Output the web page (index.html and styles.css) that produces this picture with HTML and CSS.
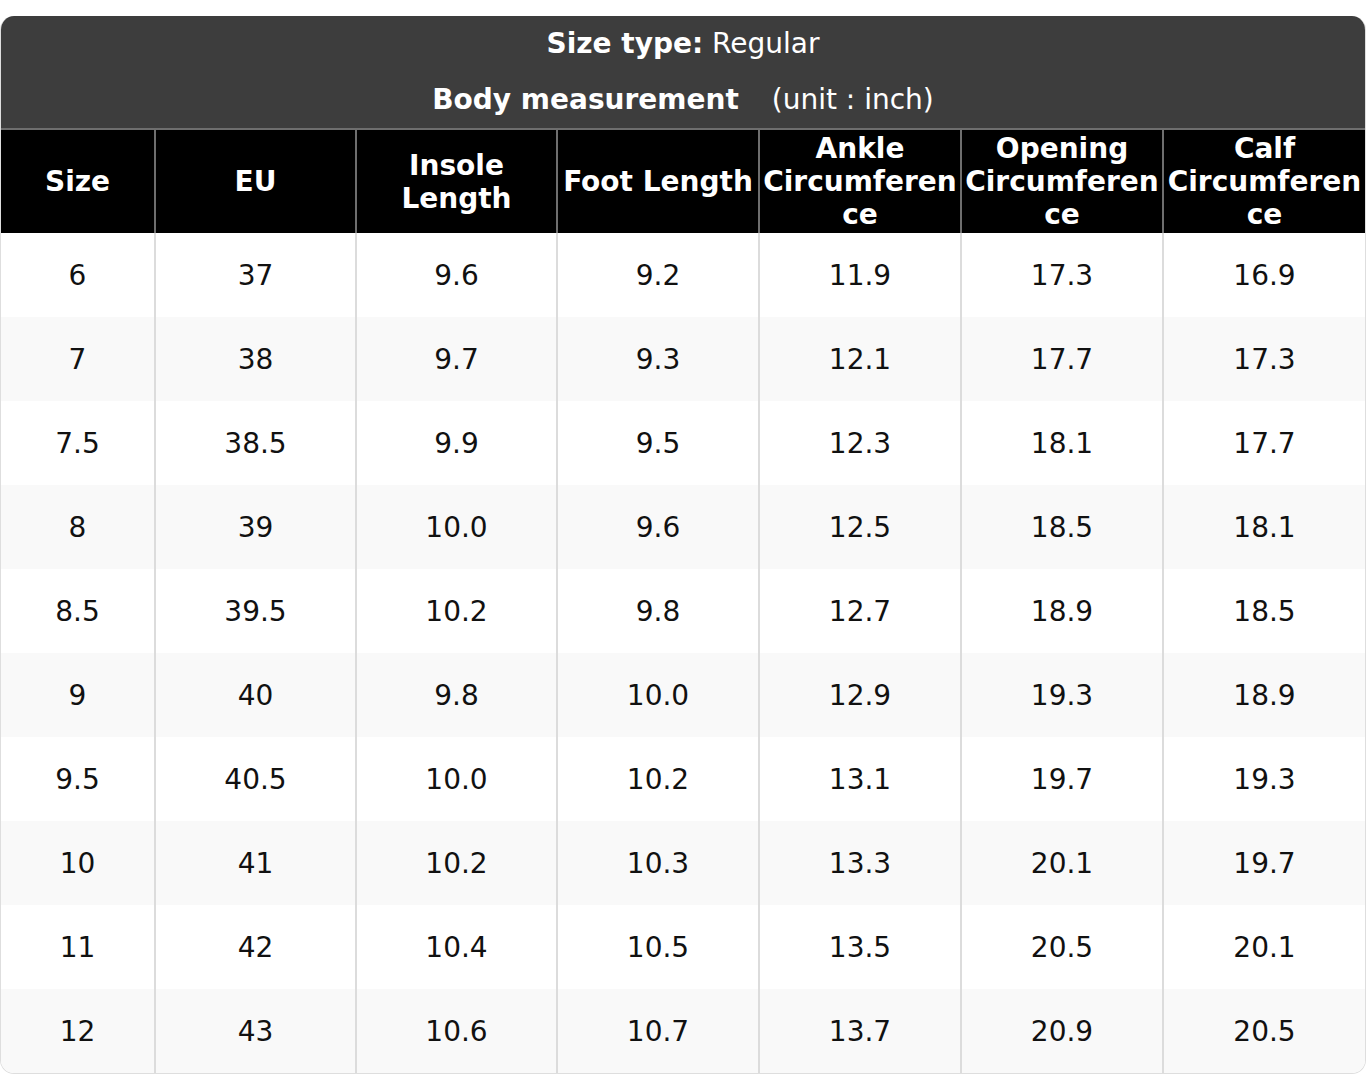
FILE: index.html
```html
<!DOCTYPE html>
<html lang="en">
<head>
<meta charset="utf-8">
<title>Size chart</title>
<link rel="stylesheet" href="styles.css">
</head>
<body>
<div class="chart">
  <div class="caption">
    <div class="caption-line"><b>Size type:</b> Regular</div>
    <div class="caption-line"><b>Body measurement</b> <span class="unit">(unit : inch)</span></div>
  </div>
  <table class="sizes">
    <colgroup>
      <col class="c1"><col class="c2"><col class="c3"><col class="c4"><col class="c5"><col class="c6"><col class="c7">
    </colgroup>
    <thead>
      <tr>
        <th>Size</th><th>EU</th><th>Insole Length</th><th>Foot Length</th><th>Ankle Circumference</th><th>Opening Circumference</th><th>Calf Circumference</th>
      </tr>
    </thead>
    <tbody>
      <tr><td>6</td><td>37</td><td>9.6</td><td>9.2</td><td>11.9</td><td>17.3</td><td>16.9</td></tr>
      <tr><td>7</td><td>38</td><td>9.7</td><td>9.3</td><td>12.1</td><td>17.7</td><td>17.3</td></tr>
      <tr><td>7.5</td><td>38.5</td><td>9.9</td><td>9.5</td><td>12.3</td><td>18.1</td><td>17.7</td></tr>
      <tr><td>8</td><td>39</td><td>10.0</td><td>9.6</td><td>12.5</td><td>18.5</td><td>18.1</td></tr>
      <tr><td>8.5</td><td>39.5</td><td>10.2</td><td>9.8</td><td>12.7</td><td>18.9</td><td>18.5</td></tr>
      <tr><td>9</td><td>40</td><td>9.8</td><td>10.0</td><td>12.9</td><td>19.3</td><td>18.9</td></tr>
      <tr><td>9.5</td><td>40.5</td><td>10.0</td><td>10.2</td><td>13.1</td><td>19.7</td><td>19.3</td></tr>
      <tr><td>10</td><td>41</td><td>10.2</td><td>10.3</td><td>13.3</td><td>20.1</td><td>19.7</td></tr>
      <tr><td>11</td><td>42</td><td>10.4</td><td>10.5</td><td>13.5</td><td>20.5</td><td>20.1</td></tr>
      <tr><td>12</td><td>43</td><td>10.6</td><td>10.7</td><td>13.7</td><td>20.9</td><td>20.5</td></tr>
    </tbody>
  </table>
</div>
</body>
</html>
```

FILE: styles.css
```css
html, body {
  margin: 0;
  padding: 0;
  background: #ffffff;
}

body {
  padding-top: 16px;
  font-family: "DejaVu Sans", "Noto Sans", sans-serif;
  font-size: 28px;
  color: #111111;
}

.chart {
  width: 1366px;
  box-sizing: border-box;
  border: 1px solid #dedede;
  border-top: none;
  border-radius: 14px;
  overflow: hidden;
}

.caption {
  background: #3d3d3d;
  color: #ffffff;
  text-align: center;
  border-bottom: 2px solid #6e6e6e;
}

.caption-line {
  height: 56px;
  line-height: 56px;
}

.caption-line b {
  font-weight: bold;
}

.unit {
  margin-left: 24px;
}

.sizes {
  width: 100%;
  table-layout: fixed;
  border-collapse: collapse;
}

.c1 { width: 154px; }
.c2 { width: 201px; }
.c3 { width: 201px; }
.c4 { width: 202px; }
.c5 { width: 202px; }
.c6 { width: 202px; }
.c7 { width: auto; }

.sizes th {
  background: #000000;
  color: #ffffff;
  font-weight: bold;
  height: 103px;
  padding: 0 3px;
  box-sizing: border-box;
  text-align: center;
  vertical-align: middle;
  line-height: 33px;
  overflow-wrap: anywhere;
  border-left: 2px solid #6e6e6e;
}

.sizes th:first-child,
.sizes td:first-child {
  border-left: none;
}

.sizes td {
  height: 84px;
  padding: 0 4px;
  box-sizing: border-box;
  text-align: center;
  vertical-align: middle;
  border-left: 2px solid #dcdcdc;
}

.sizes tbody tr:nth-child(even) td {
  background: #f9f9f9;
}
```
